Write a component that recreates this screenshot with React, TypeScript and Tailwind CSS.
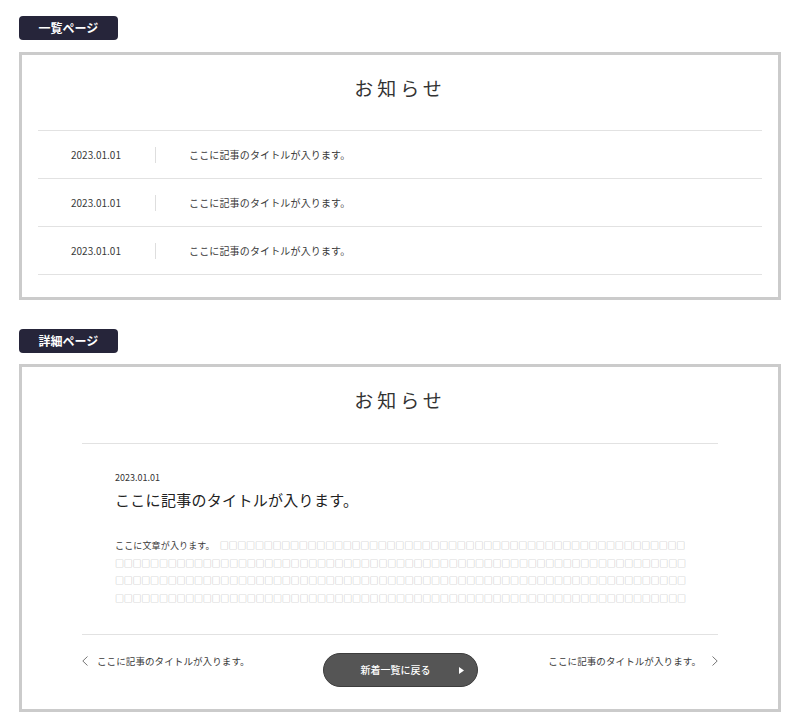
import React from "react";

const FONT = { fontFamily: '"Noto Sans CJK JP", "Noto Sans", sans-serif' };

function Badge({ label }: { label: string }) {
  return (
    <div className="flex h-[24px] w-[99px] items-center justify-center rounded-[4px] bg-[#26253a] text-[12px] font-bold leading-none text-white">
      {label}
    </div>
  );
}

function Heading() {
  return (
    <h2 className="text-center text-[19px] leading-[28px] tracking-[4px] text-[#333]">
      お知らせ
    </h2>
  );
}

function ListRow() {
  return (
    <li className="flex h-[48px] items-center border-b border-[#e2e2e2] text-[10px] text-[#3a3a3a]">
      <span className="w-[117px] pl-[33px]">2023.01.01</span>
      <span className="h-[16px] w-px bg-[#dedede]" />
      <span className="pl-[33px] tracking-[0.15px]">ここに記事のタイトルが入ります。</span>
    </li>
  );
}

const SQ = "□";
function squares(n: number) {
  return SQ.repeat(n);
}

function ChevronLeft() {
  return (
    <svg width="6" height="10" viewBox="0 0 6 10" className="shrink-0">
      <polyline points="5.5,0.5 0.8,5 5.5,9.5" fill="none" stroke="#777" strokeWidth="1" />
    </svg>
  );
}

function ChevronRight() {
  return (
    <svg width="6" height="10" viewBox="0 0 6 10" className="shrink-0">
      <polyline points="0.5,0.5 5.2,5 0.5,9.5" fill="none" stroke="#777" strokeWidth="1" />
    </svg>
  );
}

export default function App() {
  return (
    <div className="min-h-[727px] bg-white px-[19px] pt-[16px]" style={FONT}>
      <Badge label="一覧ページ" />
      <section className="mt-[12px] border-[3px] border-[#cbcbcb] px-[16px] pb-[22px]">
        <div className="h-[75px] pt-[19px]">
          <Heading />
        </div>
        <ul className="border-t border-[#e2e2e2]">
          <ListRow />
          <ListRow />
          <ListRow />
        </ul>
      </section>

      <div className="mt-[29px]">
        <Badge label="詳細ページ" />
      </div>
      <section className="mt-[11px] border-[3px] border-[#cbcbcb] px-[60px] pb-[22px]">
        <div className="h-[76px] pt-[19px]">
          <Heading />
        </div>
        <div className="border-t border-[#e2e2e2] px-[33px] pb-[27px] pt-[27px]">
          <p className="text-[9px] leading-[14px] text-[#333]">2023.01.01</p>
          <h3 className="mt-[4px] text-[15px] leading-[22px] tracking-[0.3px] text-[#222]">
            ここに記事のタイトルが入ります。
          </h3>
          <div className="mt-[26px] whitespace-nowrap text-[9px] leading-[17.5px]">
            <p>
              <span className="tracking-[0.15px] text-[#3a3a3a]">ここに文章が入ります。</span>
              <span className="ml-[5px] tracking-[-0.22px] text-[#b5b5b5]">{squares(53)}</span>
            </p>
            <p className="tracking-[-0.22px] text-[#b5b5b5]">{squares(65)}</p>
            <p className="tracking-[-0.22px] text-[#b5b5b5]">{squares(65)}</p>
            <p className="tracking-[-0.22px] text-[#b5b5b5]">{squares(65)}</p>
          </div>
        </div>
        <div className="grid grid-cols-3 items-start border-t border-[#e2e2e2] pt-[18px] text-[9.5px] leading-[16px] text-[#3a3a3a]">
          <a className="flex items-center gap-[9px] justify-self-start">
            <ChevronLeft />
            <span className="tracking-[0.1px]">ここに記事のタイトルが入ります。</span>
          </a>
          <button className="flex h-[34px] w-[155px] items-center justify-between justify-self-center rounded-full border border-[#3d3d3d] bg-[#555] pl-[37px] pr-[13px] text-[10px] font-medium text-white">
            <span>新着一覧に戻る</span>
            <svg width="5" height="7" viewBox="0 0 5 7">
              <polygon points="0,0 5,3.5 0,7" fill="#fff" />
            </svg>
          </button>
          <a className="flex items-center gap-[11px] justify-self-end">
            <span className="tracking-[0.1px]">ここに記事のタイトルが入ります。</span>
            <ChevronRight />
          </a>
        </div>
      </section>
    </div>
  );
}
